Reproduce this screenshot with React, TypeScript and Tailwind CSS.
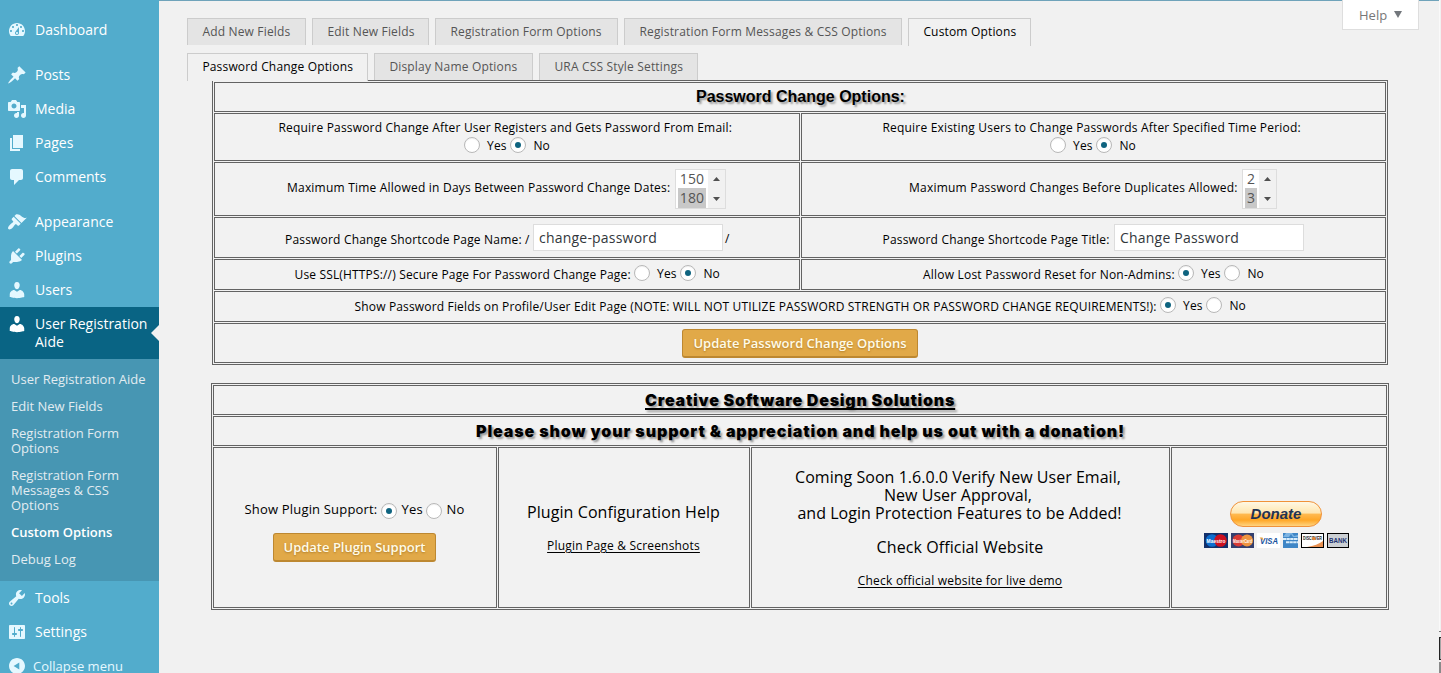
import type { ReactNode } from "react";

type MenuIconProps = { d: string; className?: string };

const ICONS = {
  dashboard:
    "M3.76 16h12.48c1.1-1.37 1.76-3.11 1.76-5 0-4.42-3.58-8-8-8s-8 3.58-8 8c0 1.89.66 3.63 1.76 5zM10 4c.55 0 1 .45 1 1s-.45 1-1 1-1-.45-1-1 .45-1 1-1zM6 6c.55 0 1 .45 1 1s-.45 1-1 1-1-.45-1-1 .45-1 1-1zm8 0c.55 0 1 .45 1 1s-.45 1-1 1-1-.45-1-1 .45-1 1-1zm-5.37 5.55L12 7v6c0 1.1-.9 2-2 2s-2-.9-2-2c0-.57.24-1.08.63-1.45zM4 10c.55 0 1 .45 1 1s-.45 1-1 1-1-.45-1-1 .45-1 1-1zm12 0c.55 0 1 .45 1 1s-.45 1-1 1-1-.45-1-1 .45-1 1-1zm-5 3c0-.55-.45-1-1-1s-1 .45-1 1 .45 1 1 1 1-.45 1-1z",
  posts:
    "M10.44 3.02l1.82-1.82 6.36 6.35-1.83 1.82c-1.05-.68-2.48-.57-3.41.36l-.75.75c-.92.93-1.04 2.35-.35 3.41l-1.83 1.82-2.41-2.41-2.8 2.79c-.42.42-3.38 2.71-3.8 2.29s1.86-3.39 2.28-3.81l2.79-2.79L4.1 9.36l1.83-1.82c1.05.69 2.48.57 3.4-.36l.75-.75c.93-.92 1.05-2.35.36-3.41z",
  media:
    "M13 11V4c0-.55-.45-1-1-1h-1.67L9 1H5L3.67 3H2c-.55 0-1 .45-1 1v7c0 .55.45 1 1 1h10c.55 0 1-.45 1-1zM7 4.5c1.38 0 2.5 1.12 2.5 2.5S8.38 9.5 7 9.5 4.5 8.38 4.5 7 5.62 4.5 7 4.5zM14 6h5v10.5c0 1.38-1.12 2.5-2.5 2.5S14 17.88 14 16.5s1.12-2.5 2.5-2.5c.17 0 .34.02.5.05V9h-3V6zm-4 8.05V13h2v3.5c0 1.38-1.12 2.5-2.5 2.5S7 17.88 7 16.5 8.12 14 9.5 14c.17 0 .34.02.5.05z",
  pages: "M6 15V2h10v13H6zm-1 1h8v2H3V5h2v11z",
  comments: "M5 2h9c1.1 0 2 .9 2 2v7c0 1.1-.9 2-2 2h-2l-5 5v-5H5c-1.1 0-2-.9-2-2V4c0-1.1.9-2 2-2z",
  appearance:
    "M14.48 11.06L7.41 3.99l1.5-1.5c.5-.56 2.3-.47 3.51.32 1.21.8 1.43 1.28 2.91 2.1 1.18.64 2.45 1.26 4.45.85zm-.71.71L6.7 4.7 4.93 6.47c-.39.39-.39 1.02 0 1.41l1.06 1.06c.39.39.39 1.03 0 1.42-.6.6-1.43 1.11-2.21 1.69-.35.26-.7.53-1.01.84C1.43 14.23.4 16.08 1.4 17.07c.99 1 2.84-.03 4.18-1.36.31-.31.58-.66.85-1.02.57-.78 1.08-1.61 1.69-2.21.39-.39 1.02-.39 1.41 0l1.06 1.06c.39.39 1.02.39 1.41 0z",
  plugins:
    "M13.11 4.36L9.87 7.6 8 5.73l3.24-3.24c.35-.34 1.05-.2 1.56.32.52.51.66 1.21.31 1.55zm-8 1.77l.91-1.12 9.01 9.01-1.19.84c-.71.71-2.63 1.16-3.82 1.16H6.14L4.9 17.26c-.59.59-1.54.59-2.12 0-.59-.58-.59-1.53 0-2.12l1.24-1.24v-3.88c0-1.13.4-3.19 1.09-3.89zm7.26 3.97l3.24-3.24c.34-.35 1.04-.21 1.55.31.52.51.66 1.21.31 1.55l-3.24 3.25z",
  users:
    "M10 9.25c-2.27 0-2.73-3.44-2.73-3.44C7 4.02 7.82 2 9.97 2c2.16 0 2.98 2.02 2.71 3.81 0 0-.41 3.44-2.68 3.44zm0 2.57L12.72 10c2.39 0 4.52 2.33 4.52 4.53v2.49s-3.65 1.13-7.24 1.13c-3.65 0-7.24-1.13-7.24-1.13v-2.49c0-2.25 1.94-4.48 4.47-4.48z",
  tools:
    "M16.68 9.77c-1.34 1.34-3.3 1.67-4.95.99l-5.41 6.52c-.99.99-2.59.99-3.58 0s-.99-2.59 0-3.57l6.52-5.42c-.68-1.65-.35-3.61.99-4.95 1.28-1.28 3.12-1.62 4.72-1.06l-2.89 2.89 2.82 2.82 2.86-2.87c.53 1.58.18 3.39-1.08 4.65zM3.81 16.21c.4.39 1.04.39 1.43 0 .4-.4.4-1.04 0-1.43-.39-.4-1.03-.4-1.43 0-.39.39-.39 1.03 0 1.43z",
  settings:
    "M18 16V4c0-.55-.45-1-1-1H3c-.55 0-1 .45-1 1v12c0 .55.45 1 1 1h14c.55 0 1-.45 1-1zM8 11h1c.55 0 1 .45 1 1s-.45 1-1 1H8v1.5c0 .28-.22.5-.5.5s-.5-.22-.5-.5V13H6c-.55 0-1-.45-1-1s.45-1 1-1h1V5.5c0-.28.22-.5.5-.5s.5.22.5.5V11zm5-2h-1c-.55 0-1-.45-1-1s.45-1 1-1h1V5.5c0-.28.22-.5.5-.5s.5.22.5.5V7h1c.55 0 1 .45 1 1s-.45 1-1 1h-1v5.5c0 .28-.22.5-.5.5s-.5-.22-.5-.5V9z",
  collapse:
    "M10 2c4.42 0 8 3.58 8 8s-3.58 8-8 8-8-3.58-8-8 3.58-8 8-8zM12.3 6.6L6.6 10l5.7 3.4z",
};

function MenuIcon({ d, className = "fill-[#e5f8ff]" }: MenuIconProps) {
  return (
    <svg viewBox="0 0 20 20" className={`mr-2 ml-[7px] h-5 w-5 shrink-0 ${className}`}>
      <path d={d} fillRule="evenodd" />
    </svg>
  );
}

function MenuItem({ icon, label }: { icon: string; label: string }) {
  return (
    <li className="flex h-[34px] items-center text-sm leading-[18px] text-white">
      <MenuIcon d={icon} />
      {label}
    </li>
  );
}

const SUBMENU = [
  "User Registration Aide",
  "Edit New Fields",
  "Registration Form Options",
  "Registration Form Messages & CSS Options",
  "Custom Options",
  "Debug Log",
];

function Sidebar() {
  return (
    <nav className="h-full w-[159px] shrink-0 overflow-hidden bg-[#52accc] pt-[13px]">
      <ul>
        <MenuItem icon={ICONS.dashboard} label="Dashboard" />
      </ul>
      <ul className="mt-[11px]">
        <MenuItem icon={ICONS.posts} label="Posts" />
        <MenuItem icon={ICONS.media} label="Media" />
        <MenuItem icon={ICONS.pages} label="Pages" />
        <MenuItem icon={ICONS.comments} label="Comments" />
      </ul>
      <ul className="mt-[11px]">
        <MenuItem icon={ICONS.appearance} label="Appearance" />
        <MenuItem icon={ICONS.plugins} label="Plugins" />
        <MenuItem icon={ICONS.users} label="Users" />
        <li>
          <div className="relative flex h-[52px] bg-[#096484] pt-2 text-sm leading-[18px] text-white">
            <MenuIcon d={ICONS.users} className="-mt-px fill-white" />
            <span>
              User Registration
              <br />
              Aide
            </span>
            <svg viewBox="0 0 8 16" className="absolute top-[18px] right-0 h-4 w-2 fill-[#f1f1f1]">
              <path d="M8 0v16L0 8z" />
            </svg>
          </div>
          <ul className="bg-[#4796b3] pt-[7px] pb-2 text-[13px] leading-[15px] text-[#e2ecf1]">
            {SUBMENU.map((label) => (
              <li
                key={label}
                className={
                  label === "Custom Options"
                    ? "py-1.5 pr-6 pl-[11px] font-semibold text-white"
                    : label === "User Registration Aide"
                      ? "py-1.5 pl-[11px] whitespace-nowrap"
                      : "py-1.5 pr-6 pl-[11px]"
                }
              >
                {label}
              </li>
            ))}
          </ul>
        </li>
        <MenuItem icon={ICONS.tools} label="Tools" />
        <MenuItem icon={ICONS.settings} label="Settings" />
        <li className="flex h-[34px] items-center text-[13px] text-[#e5f8ff]">
          <MenuIcon d={ICONS.collapse} />
          <span className="-ml-0.5 pt-0.5">Collapse menu</span>
        </li>
      </ul>
    </nav>
  );
}

function Tab({ label, className, active }: { label: string; className: string; active?: boolean }) {
  return (
    <div
      className={`border border-b-0 border-[#ccc] pl-[14.4px] text-[12px] leading-[25px] tracking-[0.17px] whitespace-nowrap ${
        active ? "relative z-10 h-7 bg-[#f1f1f1] text-black" : "h-[27px] bg-[#e4e4e4] text-[#555]"
      } ${className}`}
    >
      {label}
    </div>
  );
}

function Cell({ className = "", children }: { className?: string; children?: ReactNode }) {
  return <div className={`border border-[#636363] ${className}`}>{children}</div>;
}

function Radio({ on, className = "" }: { on?: boolean; className?: string }) {
  return (
    <span
      className={`flex h-4 w-4 shrink-0 items-center justify-center rounded-full border border-[#b8b8b8] bg-white shadow-[inset_0_1px_1px_rgba(0,0,0,0.06)] ${className}`}
    >
      {on && <span className="h-1.5 w-1.5 rounded-full bg-[#0f6480]" />}
    </span>
  );
}

function YesNo({ yes }: { yes?: boolean }) {
  return (
    <div className="flex h-4 leading-[18px]">
      <Radio on={yes} />
      <span className="ml-[7px] w-[23.4px]">Yes</span>
      <Radio on={!yes} />
      <span className="ml-[7px]">No</span>
    </div>
  );
}

function ListBox({ values, className, itemClass }: { values: string[]; className: string; itemClass: string }) {
  return (
    <div className={`flex h-10 border border-[#ddd] bg-[#f1f1f1] text-sm text-[#555] ${className}`}>
      <div className="flex flex-col overflow-hidden bg-white px-0.5 leading-[20px]">
        <span className={`h-[18px] text-center leading-[17px] ${itemClass}`}>{values[0]}</span>
        <span className={`h-5 bg-[#c8c8c8] text-center ${itemClass}`}>{values[1]}</span>
      </div>
      <div className="flex flex-1 flex-col items-center justify-between py-[7px]">
        <svg viewBox="0 0 7 4" className="h-1 w-[7px] fill-[#505050]">
          <path d="M3.5 0L7 4H0z" />
        </svg>
        <svg viewBox="0 0 7 4" className="h-1 w-[7px] fill-[#505050]">
          <path d="M0 0h7L3.5 4z" />
        </svg>
      </div>
    </div>
  );
}

function TextBox({ value, className }: { value: string; className: string }) {
  return (
    <div
      className={`h-[27px] w-[190px] border border-[#ddd] bg-white pl-[5px] text-sm leading-[25px] tracking-[0.21px] text-[#32373c] ${className}`}
    >
      {value}
    </div>
  );
}

function Button({ label, className }: { label: string; className: string }) {
  return (
    <button
      className={`block h-[29px] rounded-[3px] border border-b-2 border-[#bd8831] bg-[#e1a948] text-center text-[13px] leading-[26px] font-semibold tracking-normal whitespace-nowrap text-[#fffbe8] [text-shadow:0_1px_2px_#b17f2b] ${className}`}
    >
      {label}
    </button>
  );
}

function PasswordTable() {
  return (
    <section className="ml-[53px] flex w-[1176px] flex-col gap-px border border-[#636363] bg-[#f2f2f2] p-px">
      <Cell className="h-[30px] pl-[481px] font-['Liberation_Sans',sans-serif] text-base leading-[28px] font-bold tracking-normal [text-shadow:2px_2px_2px_#999]">
        Password Change Options:
      </Cell>
      <div className="flex gap-px">
        <Cell className="h-12 w-[586px] pt-[5px] pl-[63.5px]">
          <p className="leading-[18px]">Require Password Change After User Registers and Gets Password From Email:</p>
          <div className="pl-[185.5px]">
            <YesNo />
          </div>
        </Cell>
        <Cell className="h-12 w-[585px] pt-[5px] pl-[80.5px]">
          <p className="leading-[18px]">Require Existing Users to Change Passwords After Specified Time Period:</p>
          <div className="pl-[167.5px]">
            <YesNo />
          </div>
        </Cell>
      </div>
      <div className="flex gap-px">
        <Cell className="flex h-[54px] w-[586px] pt-1.5 pl-[72px]">
          <p className="w-[388px] leading-[37px] tracking-[0.21px]">
            Maximum Time Allowed in Days Between Password Change Dates:
          </p>
          <ListBox values={["150", "180"]} className="w-[51px]" itemClass="w-7 tracking-[0.2px]" />
        </Cell>
        <Cell className="flex h-[54px] w-[585px] pt-1.5 pl-[107px]">
          <p className="w-[333px] leading-[37px] tracking-[0.22px]">
            Maximum Password Changes Before Duplicates Allowed:
          </p>
          <ListBox values={["2", "3"]} className="w-[35px]" itemClass="w-3" />
        </Cell>
      </div>
      <div className="flex gap-px">
        <Cell className="flex h-[41px] w-[586px] pl-[70px]">
          <p className="w-[248px] leading-[44px]">Password Change Shortcode Page Name: /</p>
          <TextBox value="change-password" className="mt-1.5" />
          <p className="ml-0.5 leading-[42px]">/</p>
        </Cell>
        <Cell className="flex h-[41px] w-[585px] pl-[80.5px]">
          <p className="w-[231.5px] leading-[44px]">Password Change Shortcode Page Title:</p>
          <TextBox value="Change Password" className="mt-1.5" />
        </Cell>
      </div>
      <div className="flex gap-px">
        <Cell className="flex h-[31px] w-[586px] pt-[5px] pl-[79.5px]">
          <p className="w-[339.5px] leading-[20px] tracking-[0.16px]">
            Use SSL(HTTPS://) Secure Page For Password Change Page:
          </p>
          <YesNo />
        </Cell>
        <Cell className="flex h-[31px] w-[585px] pt-[5px] pl-[121px]">
          <p className="w-[255px] leading-[20px] tracking-[0.21px]">Allow Lost Password Reset for Non-Admins:</p>
          <YesNo yes />
        </Cell>
      </div>
      <Cell className="flex h-[31px] pt-[5px] pl-[139.5px]">
        <p className="w-[805.5px] leading-[20px] tracking-[0.162px] whitespace-nowrap">
          Show Password Fields on Profile/User Edit Page (NOTE: WILL NOT UTILIZE PASSWORD STRENGTH OR PASSWORD
          CHANGE REQUIREMENTS!):
        </p>
        <YesNo yes />
      </Cell>
      <Cell className="h-10 pt-[5px] pl-[467px]">
        <Button label="Update Password Change Options" className="w-[236px]" />
      </Cell>
    </section>
  );
}

function DonateButton() {
  return (
    <div className="h-[26px] w-[92px] rounded-full border border-[#f0923a] bg-[linear-gradient(#fff8e4_0%,#ffe6b0_45%,#ffb84d_52%,#ffa726_75%,#ffd480_100%)] text-center font-['Liberation_Sans',sans-serif] text-[15px] leading-[24px] font-bold tracking-normal text-[#1f3354] italic">
      Donate
    </div>
  );
}

function PaymentCards() {
  const text = "font-['Liberation_Sans',sans-serif] font-bold tracking-normal";
  return (
    <svg viewBox="0 0 146 15" className="mt-1.5 ml-0.5 h-[15px] w-[146px] shrink-0">
      <rect width="24" height="15" fill="#12306b" />
      <circle cx="8" cy="7.5" r="6.3" fill="#0d6fd0" />
      <circle cx="16.5" cy="7.5" r="6.3" fill="#cc1020" />
      <text x="2.5" y="9.5" textLength="19" lengthAdjust="spacingAndGlyphs" fill="#fff" className={`${text} text-[5.5px]`}>Maestro</text>
      <rect x="27" width="23" height="15" fill="#34406f" />
      <circle cx="34.5" cy="7.5" r="6" fill="#d83a35" />
      <circle cx="43" cy="7.5" r="6" fill="#ee9440" />
      <text x="29" y="9.5" textLength="19" lengthAdjust="spacingAndGlyphs" fill="#fff" className={`${text} text-[5px]`}>MasterCard</text>
      <rect x="53" width="23" height="15" fill="#fff" />
      <text x="56" y="10.8" textLength="18" lengthAdjust="spacingAndGlyphs" fill="#1b559f" className={`${text} text-[8.5px] italic`}>VISA</text>
      <path d="M55.5 4.5h3l1 3z" fill="#e5a13a" />
      <rect x="79" width="15" height="15" fill="#3f86c6" />
      <path d="M82 0l-3 4h6l2-3 2 3h5V2l-4 1-2-3z" fill="#7db4e2" />
      <path d="M79 6h15M82 9.2h12" stroke="#d8ecfa" strokeWidth="2" strokeDasharray="3.2 .4" />
      <rect x="97.5" y=".5" width="22" height="14" fill="#fff" stroke="#000" />
      <path d="M119 8v6h-16c7-1 12-3 16-6z" fill="#e89050" />
      <text x="99" y="7.4" textLength="19" lengthAdjust="spacingAndGlyphs" fill="#222" className={`${text} text-[5.5px]`}>DISCOVER</text>
      <circle cx="109.8" cy="5.5" r="1.7" fill="#e58432" />
      <rect x="123.5" y=".5" width="21" height="14" fill="#ccd0d4" stroke="#000" />
      <text x="125" y="9.8" textLength="18" lengthAdjust="spacingAndGlyphs" fill="#1d3272" className={`${text} text-[6.5px]`}>BANK</text>
    </svg>
  );
}

function SupportTable() {
  return (
    <section className="mt-[18px] ml-[52px] flex w-[1178px] flex-col gap-px border border-[#636363] bg-[#f2f2f2] p-px">
      <Cell className="h-[30px] pl-[431px] font-['Inter',sans-serif] text-base leading-[28px] font-black tracking-[0.77px] [text-shadow:2px_2px_2px_#999]">
        <span className="underline decoration-2 underline-offset-2 [text-decoration-skip-ink:none]">
          Creative Software Design Solutions
        </span>
      </Cell>
      <Cell className="h-[30px] pl-[262px] font-['Inter',sans-serif] text-base leading-[28px] font-black tracking-[0.89px] [text-shadow:2px_2px_2px_#999]">
        Please show your support &amp; appreciation and help us out with a donation!
      </Cell>
      <div className="flex gap-px">
        <Cell className="h-[161px] w-[284px] pt-[53px]">
          <div className="flex pl-[30.5px] text-[13px] leading-[16px] tracking-[0.18px]">
            <span className="w-[136.5px]">Show Plugin Support:</span>
            <Radio on className="mt-0.5" />
            <span className="ml-[4.5px] w-[24.5px]">Yes</span>
            <Radio className="mt-0.5" />
            <span className="ml-[4.5px]">No</span>
          </div>
          <Button label="Update Plugin Support" className="mt-[14px] ml-[59px] w-[163px]" />
        </Cell>
        <Cell className="h-[161px] w-[252px] pt-[55px] pr-px text-center">
          <p className="text-base leading-[18px] tracking-[0.08px]">Plugin Configuration Help</p>
          <p className="mt-4 leading-[18px] underline underline-offset-2">Plugin Page &amp; Screenshots</p>
        </Cell>
        <Cell className="h-[161px] w-[419px] pt-5 pr-px text-center">
          <div className="pr-1 text-base leading-[18px] tracking-[0.03px]">
            <p>Coming Soon 1.6.0.0 Verify New User Email,</p>
            <p>New User Approval,</p>
            <p className="pl-[3px]">and Login Protection Features to be Added!</p>
          </div>
          <p className="mt-4 text-base leading-[18px] tracking-[0.08px]">Check Official Website</p>
          <p className="mt-4 leading-[18px] tracking-[0.22px] underline underline-offset-2">
            Check official website for live demo
          </p>
        </Cell>
        <Cell className="flex h-[161px] w-[216px] flex-col items-center pt-[53px] pr-4 pl-[10px]">
          <DonateButton />
          <PaymentCards />
        </Cell>
      </div>
    </section>
  );
}

export default function App() {
  return (
    <div className="relative flex h-[673px] w-[1441px] overflow-hidden bg-[#f1f1f1] font-['Open_Sans',sans-serif]">
      <Sidebar />
      <main className="w-[1280px] border-t border-[#6fa3ba] text-[12px] tracking-[0.187px] text-black">
        <div className="mt-[17px] ml-7 flex h-7 gap-1.5">
          <Tab label="Add New Fields" className="w-[119px]" />
          <Tab label="Edit New Fields" className="w-[117px]" />
          <Tab label="Registration Form Options" className="w-[183px]" />
          <Tab label="Registration Form Messages & CSS Options" className="w-[278px]" />
          <Tab label="Custom Options" className="w-[123px]" active />
        </div>
        <div className="mt-[7px] ml-7 flex h-[27px] gap-1.5">
          <Tab label="Password Change Options" className="w-[181px]" active />
          <Tab label="Display Name Options" className="w-[159px]" />
          <Tab label="URA CSS Style Settings" className="w-[159px]" />
        </div>
        <PasswordTable />
        <SupportTable />
      </main>
      <div className="absolute top-0 left-[1342px] flex h-[30px] w-[77px] items-center gap-[7px] border border-t-0 border-[#dedede] bg-white pt-0.5 pl-4 text-[13px] text-[#777]">
        Help
        <svg viewBox="0 0 8 7" className="-mt-0.5 h-[7px] w-2 fill-[#72777c]">
          <path d="M0 0h8L4 7z" />
        </svg>
      </div>
      <div className="absolute right-0 bottom-0 flex h-full w-0.5 flex-col justify-end">
        <div className="w-px flex-1 bg-[#f9f9f9]" />
        <div className="h-px bg-[#777]" />
        <div className="mt-[5px] h-[23px] border border-r-0 border-[#222] bg-[#a5a5a5]" />
        <div className="mt-0.5 h-[11px] bg-[#8a8a8a]" />
      </div>
    </div>
  );
}
